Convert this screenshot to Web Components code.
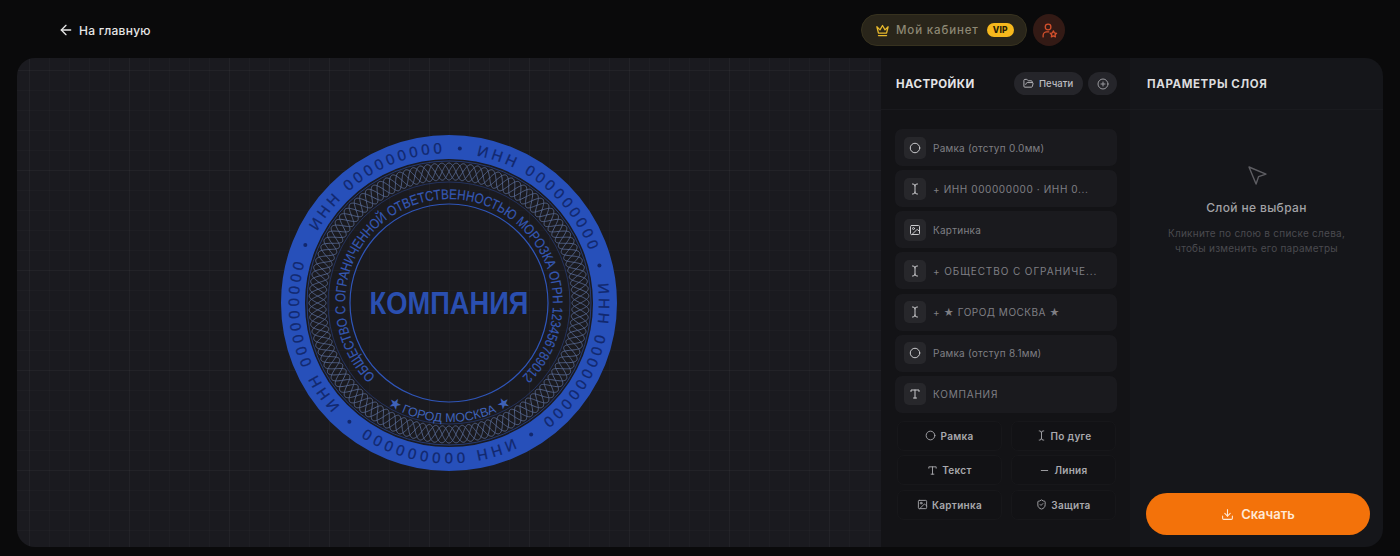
<!DOCTYPE html>
<html lang="ru">
<head>
<meta charset="utf-8">
<title>Печать</title>
<style>
html, body { margin: 0; height: 100%; background: #0a0a0b; overflow: hidden; }
body { font-family: Inter, "Noto Sans", sans-serif; color: #ddd; }
</style>
</head>
<body>
<app-page>
  <app-header></app-header>
  <stamp-canvas></stamp-canvas>
  <settings-panel>
    <layer-row icon="circle">Рамка (отступ 0.0мм)</layer-row>
    <layer-row icon="cursor" style="letter-spacing:.6px">+ ИНН 000000000 · ИНН 0...</layer-row>
    <layer-row icon="image">Картинка</layer-row>
    <layer-row icon="cursor" style="letter-spacing:.9px">+ ОБЩЕСТВО С ОГРАНИЧЕ...</layer-row>
    <layer-row icon="cursor" style="letter-spacing:.5px">+ ★ ГОРОД МОСКВА ★</layer-row>
    <layer-row icon="circle">Рамка (отступ 8.1мм)</layer-row>
    <layer-row icon="type" style="letter-spacing:.8px">КОМПАНИЯ</layer-row>
    <add-button slot="add" icon="circle">Рамка</add-button>
    <add-button slot="add" icon="cursor">По дуге</add-button>
    <add-button slot="add" icon="type">Текст</add-button>
    <add-button slot="add" icon="minus">Линия</add-button>
    <add-button slot="add" icon="image">Картинка</add-button>
    <add-button slot="add" icon="shield">Защита</add-button>
  </settings-panel>
  <params-panel></params-panel>
</app-page>

<script>
const ICONS = {
  arrow: '<path d="M19 12H5"/><path d="m12 19-7-7 7-7"/>',
  crown: '<path d="M3 6l2.5 10h13L21 6l-5 5-4-7-4 7z"/><path d="M5.5 20h13"/>',
  userstar: '<circle cx="10" cy="7" r="4"/><path d="M3 21v-2a5 5 0 0 1 5-5h3"/><path d="m17.5 12.5 1.5 3 3 .4-2.2 2.1.6 3-2.9-1.5-2.9 1.5.6-3-2.2-2.1 3-.4z"/>',
  folder: '<path d="m6 14 1.45-2.9A2 2 0 0 1 9.24 10H20a2 2 0 0 1 1.94 2.5l-1.55 6a2 2 0 0 1-1.94 1.5H4a2 2 0 0 1-2-2V5c0-1.1.9-2 2-2h3.93a2 2 0 0 1 1.66.9l.82 1.2a2 2 0 0 0 1.66.9H18a2 2 0 0 1 2 2v2"/>',
  plus: '<circle cx="12" cy="12" r="10"/><path d="M8 12h8"/><path d="M12 8v8"/>',
  circle: '<circle cx="12" cy="12" r="9.5"/>',
  cursor: '<path d="M17 22h-1a4 4 0 0 1-4-4V6a4 4 0 0 1 4-4h1"/><path d="M7 22h1a4 4 0 0 0 4-4"/><path d="M7 2h1a4 4 0 0 1 4 4"/>',
  image: '<rect x="3" y="3" width="18" height="18" rx="2"/><circle cx="9" cy="9" r="2"/><path d="m21 15-3-3a2 2 0 0 0-3 0L6 21"/>',
  type: '<path d="M4 7V4h16v3"/><path d="M9 20h6"/><path d="M12 4v16"/>',
  minus: '<path d="M5 12h14"/>',
  shield: '<path d="M20 13c0 5-3.5 7.5-7.66 8.95a1 1 0 0 1-.67-.01C7.5 20.5 4 18 4 13V6a1 1 0 0 1 1-1c2 0 4.5-1.2 6.24-2.72a1.17 1.17 0 0 1 1.52 0C14.51 3.81 17 5 19 5a1 1 0 0 1 1 1z"/><path d="m9 12 2 2 4-4"/>',
  download: '<path d="M21 15v4a2 2 0 0 1-2 2H5a2 2 0 0 1-2-2v-4"/><path d="m7 10 5 5 5-5"/><path d="M12 15V3"/>',
  pointer: '<path d="m4 4 7.07 17 2.51-7.39L21 11.07z"/>'
};

class UiIcon extends HTMLElement {
  connectedCallback() {
    const size = this.getAttribute('size') || 12;
    const sw = this.getAttribute('stroke') || 2;
    this.attachShadow({ mode: 'open' }).innerHTML = `
      <style>:host{display:inline-flex;flex:none} svg{display:block}</style>
      <svg width="${size}" height="${size}" viewBox="0 0 24 24" fill="none" stroke="currentColor"
        stroke-width="${sw}" stroke-linecap="round" stroke-linejoin="round">${ICONS[this.getAttribute('name')]}</svg>`;
  }
}
customElements.define('ui-icon', UiIcon);

class AppPage extends HTMLElement {
  constructor() {
    super();
    this.attachShadow({ mode: 'open' }).innerHTML = `
      <style>
        :host { display: grid; grid-template-columns: 864px 249px 253px; grid-template-rows: 58px 489px;
          padding: 0 17px; width: 1366px; }
        ::slotted(app-header) { grid-column: 1 / -1; }
      </style>
      <slot></slot>`;
  }
}
customElements.define('app-page', AppPage);

class AppHeader extends HTMLElement {
  constructor() {
    super();
    this.attachShadow({ mode: 'open' }).innerHTML = `
      <style>
        :host { display: flex; align-items: center; padding: 2px 318px 0 41px; }
        .back { display: flex; align-items: center; gap: 5px; font-size: 12px; font-weight: 500; letter-spacing: .25px; color: #e6e6e6; }
        .cab { margin-left: auto; display: flex; align-items: center; height: 32px; box-sizing: border-box; width: 166px;
          padding-left: 13px; border-radius: 16px; background: #29251a; border: 1px solid #37321f; color: #8d8874;
          font-size: 11.5px; font-weight: 500; letter-spacing: .85px; }
        .cab ui-icon { color: #e8b92c; margin-right: 6px; }
        .vip { margin-left: 8px; width: 27px; height: 14px; border-radius: 7px; background: #f6b81d; color: #2a1e05;
          font-size: 8.5px; font-weight: 800; letter-spacing: .2px; display: flex; align-items: center; justify-content: center; }
        .user { margin-left: 6px; width: 32px; height: 32px; border-radius: 50%; background: #331a15; color: #d4502c;
          display: flex; align-items: center; justify-content: center; }
      </style>
      <div class="back"><ui-icon name="arrow" size="16"></ui-icon>На главную</div>
      <div class="cab"><ui-icon name="crown" size="15"></ui-icon>Мой кабинет<span class="vip">VIP</span></div>
      <div class="user"><ui-icon name="userstar" size="17" stroke="1.8"></ui-icon></div>`;
  }
}
customElements.define('app-header', AppHeader);

// path along a circle: angles in degrees, 0 is up, positive is clockwise
function arcPath(r, from, sweep) {
  const pt = a => {
    const t = a * Math.PI / 180;
    return (r * Math.sin(t)).toFixed(2) + ' ' + (-r * Math.cos(t)).toFixed(2);
  };
  return `M${pt(from)} A${r} ${r} 0 ${Math.abs(sweep) > 180 ? 1 : 0} ${sweep > 0 ? 1 : 0} ${pt(from + sweep)}`;
}

function wave(mid, amp, n, phase) {
  let d = '';
  for (let i = 0; i <= 1440; i++) {
    const t = i / 1440 * Math.PI * 2;
    const r = mid + amp * Math.sin(n * t + phase);
    d += (i ? 'L' : 'M') + (r * Math.sin(t)).toFixed(2) + ' ' + (-r * Math.cos(t)).toFixed(2);
  }
  return `<path d="${d}Z"/>`;
}

class StampCanvas extends HTMLElement {
  constructor() {
    super();
    let defs = '', outer = '', bullets = '';
    for (let k = 0; k < 5; k++) {
      const a = 72 * k;
      defs += `<path id="seg${k}" d="${arcPath(150, a + 10.6, 65)}"/>`;
      outer += `<text class="outer"><textPath href="#seg${k}">ИНН 000000000</textPath></text>`;
      const t = (a + 4) * Math.PI / 180;
      bullets += `<circle cx="${(155 * Math.sin(t)).toFixed(2)}" cy="${(-155 * Math.cos(t)).toFixed(2)}" r="2" fill="#12286e"/>`;
    }
    defs += `<path id="mid" d="${arcPath(104, 225, 274)}"/>`;
    defs += `<path id="bot" d="${arcPath(119, 212, -64)}"/>`;
    const waves = [0, Math.PI, Math.PI / 2, Math.PI * 1.5].map(p => wave(131.5, 8.5, 30, p)).join('');

    this.attachShadow({ mode: 'open' }).innerHTML = `
      <style>
        :host { display: flex; align-items: center; justify-content: center; border-radius: 18px 0 0 18px;
          background-color: #1a1a1f;
          background-image:
            linear-gradient(rgba(255,255,255,.018) 1px, transparent 1px),
            linear-gradient(90deg, rgba(255,255,255,.018) 1px, transparent 1px),
            linear-gradient(rgba(255,255,255,.014) 1px, transparent 1px),
            linear-gradient(90deg, rgba(255,255,255,.014) 1px, transparent 1px);
          background-size: 100px 100px, 100px 100px, 20px 20px, 20px 20px;
          background-position: 12px 12px; }
        svg { display: block; }
        text { font-family: "Liberation Sans", Arial, sans-serif; }
        .outer { font-size: 15px; letter-spacing: 3.5px; fill: #12286e; stroke: #12286e; stroke-width: .25px; }
        .mid { font-size: 14px; fill: #3558b4; stroke: #3558b4; stroke-width: .2px; }
        .bot { font-size: 12.5px; fill: #3f62b8; }
        .star { font-size: 15px; }
        .name { font-size: 31px; font-weight: 700; fill: #2a4fb0; }
      </style>
      <svg width="340" height="340" viewBox="-170 -170 340 340">
        <defs>${defs}</defs>
        <circle r="156" fill="none" stroke="#2750ba" stroke-width="24"/>
        <circle r="142" fill="none" stroke="#2a4286" stroke-width=".8"/>
        <g fill="none" stroke="#56678f" stroke-width=".9">${waves}</g>
        <circle r="121" fill="none" stroke="#2a4286" stroke-width=".6"/>
        <circle r="99" fill="none" stroke="#2f55b8" stroke-width="1.2"/>
        ${outer}${bullets}
        <text class="mid"><textPath href="#mid" textLength="490" lengthAdjust="spacingAndGlyphs">ОБЩЕСТВО С ОГРАНИЧЕННОЙ ОТВЕТСТВЕННОСТЬЮ МОРОЗКА ОГРН 123456789012</textPath></text>
        <text class="bot"><textPath href="#bot" startOffset="50%" text-anchor="middle"><tspan class="star">★</tspan> ГОРОД МОСКВА <tspan class="star">★</tspan></textPath></text>
        <text class="name" x="0" y="11" text-anchor="middle" textLength="159" lengthAdjust="spacingAndGlyphs">КОМПАНИЯ</text>
      </svg>`;
  }
}
customElements.define('stamp-canvas', StampCanvas);

class SettingsPanel extends HTMLElement {
  constructor() {
    super();
    this.attachShadow({ mode: 'open' }).innerHTML = `
      <style>
        :host { display: flex; flex-direction: column; background: #131316; padding: 0 13px 0 14px; }
        .top { display: flex; align-items: center; height: 51px; margin: 0 -13px 0 -14px; padding: 0 13px 0 15px;
          border-bottom: 1px solid #19191d; }
        h2 { margin: 0; font-size: 11.5px; font-weight: 700; letter-spacing: .4px; color: #e4e4e6; }
        .pill { margin-left: auto; display: flex; align-items: center; gap: 5px; height: 23px; width: 69px; box-sizing: border-box;
          padding-left: 9px; border-radius: 12px; background: #25252a; color: #bdbdc2; font-size: 9.5px; font-weight: 500; }
        .round { margin-left: 5px; width: 29px; height: 23px; border-radius: 12px; background: #25252a; color: #9a9a9f;
          display: flex; align-items: center; justify-content: center; }
        .list { display: flex; flex-direction: column; gap: 4.17px; padding-top: 19px; }
        .add { display: grid; grid-template-columns: 105px 105px; column-gap: 9px; row-gap: 4.5px;
          padding: 8px 0 0 2px; }
      </style>
      <div class="top">
        <h2>НАСТРОЙКИ</h2>
        <div class="pill"><ui-icon name="folder" size="11"></ui-icon>Печати</div>
        <div class="round"><ui-icon name="plus" size="12"></ui-icon></div>
      </div>
      <div class="list"><slot></slot></div>
      <div class="add"><slot name="add"></slot></div>`;
  }
}
customElements.define('settings-panel', SettingsPanel);

class LayerRow extends HTMLElement {
  constructor() {
    super();
    this.attachShadow({ mode: 'open' }).innerHTML = `
      <style>
        :host { display: flex; align-items: center; gap: 7px; height: 37px; padding-left: 9px; border-radius: 7px;
          background: #1a1a1e; color: #7f7f84; font-size: 10px; letter-spacing: .25px; white-space: nowrap; }
        .ic { width: 22px; height: 22px; border-radius: 5px; background: #27272b; color: #c9c9cc;
          display: flex; align-items: center; justify-content: center; }
      </style>
      <span class="ic"><ui-icon name="${this.getAttribute('icon')}" size="12"></ui-icon></span><slot></slot>`;
  }
}
customElements.define('layer-row', LayerRow);

class AddButton extends HTMLElement {
  constructor() {
    super();
    this.attachShadow({ mode: 'open' }).innerHTML = `
      <style>
        :host { display: flex; align-items: center; justify-content: center; gap: 4px; height: 30px; box-sizing: border-box;
          border: 1px solid #17171a; border-radius: 7px; background: #121215; color: #a9a9ad; font-size: 10px; font-weight: 600; letter-spacing: .3px; }
      </style>
      <ui-icon name="${this.getAttribute('icon')}" size="11"></ui-icon><slot></slot>`;
  }
}
customElements.define('add-button', AddButton);

class ParamsPanel extends HTMLElement {
  constructor() {
    super();
    this.attachShadow({ mode: 'open' }).innerHTML = `
      <style>
        :host { display: flex; flex-direction: column; background: #15161a; border-radius: 0 18px 18px 0; }
        .top { height: 51px; display: flex; align-items: center; padding-left: 17px; border-bottom: 1px solid #1a1b1f; }
        h2 { margin: 0; font-size: 11.5px; font-weight: 700; letter-spacing: .6px; color: #dcdcde; }
        .empty { flex: 1; display: flex; flex-direction: column; align-items: center; padding-top: 53px; text-align: center; }
        .empty ui-icon { color: #5e5e63; }
        .title { margin-top: 13px; font-size: 12px; font-weight: 500; letter-spacing: .35px; color: #a2a2a6; }
        .hint { margin-top: 11px; font-size: 10px; letter-spacing: .25px; line-height: 15px; color: #4a4a4f; }
        .dl { margin: 0 13px 12px 16px; height: 42px; border-radius: 21px; background: #f3720a; color: #ffe9d6;
          display: flex; align-items: center; justify-content: center; gap: 7px; font-size: 13px; font-weight: 600; }
      </style>
      <div class="top"><h2>ПАРАМЕТРЫ СЛОЯ</h2></div>
      <div class="empty">
        <ui-icon name="pointer" size="24" stroke="1.4"></ui-icon>
        <div class="title">Слой не выбран</div>
        <div class="hint">Кликните по слою в списке слева,<br>чтобы изменить его параметры</div>
      </div>
      <div class="dl"><ui-icon name="download" size="13"></ui-icon>Скачать</div>`;
  }
}
customElements.define('params-panel', ParamsPanel);
</script>
</body>
</html>
